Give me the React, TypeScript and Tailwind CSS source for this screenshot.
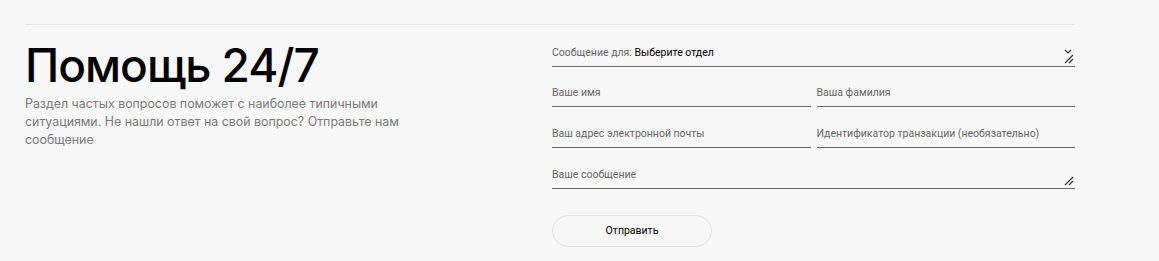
import React from "react";

function Resize() {
  return (
    <svg width="10" height="10" viewBox="0 0 10 10" className="absolute right-[1px] bottom-[2px]">
      <path d="M9 1 L1 9 M9 5 L5 9" stroke="#333" strokeWidth="1.2" />
    </svg>
  );
}

function Field({ label, children, resize }: { label: React.ReactNode; children?: React.ReactNode; resize?: boolean }) {
  return (
    <div className="relative flex-1 h-[27px] border-b border-[#6b6b6b] flex items-start pt-[5px] text-[10.5px] text-[#666]">
      {label}
      {children}
      {resize && <Resize />}
    </div>
  );
}

export default function App() {
  return (
    <div className="w-[1159px] h-[261px] bg-[#f7f7f7] pt-[24px] px-[25px] overflow-hidden" style={{ fontFamily: "Inter, 'Noto Sans', sans-serif" }}>
      <div className="w-[1050px] border-t border-[#e4e4e4] flex pt-[15px]">
        <div className="w-[527px]">
          <h1 className="text-[46px] leading-[52px] text-black tracking-[-1px] font-medium -mt-[1px]">Помощь 24/7</h1>
          <p className="mt-[4px] text-[12.4px] leading-[18px] text-[#7a7a7a] w-[390px]">
            Раздел частых вопросов поможет с наиболее типичными ситуациями. Не нашли ответ на свой вопрос? Отправьте нам сообщение
          </p>
        </div>
        <div className="flex-1 flex flex-col" style={{ fontFamily: "Roboto, 'Liberation Sans', sans-serif" }}>
          <div className="flex">
            <Field
              resize
              label={
                <span>
                  Сообщение для: <span className="text-black">Выберите отдел</span>
                </span>
              }
            >
              <svg width="8" height="5" viewBox="0 0 8 5" className="absolute right-[3px] top-[9px]">
                <path d="M1 1 L4 4 L7 1" stroke="#333" strokeWidth="1.2" fill="none" />
              </svg>
            </Field>
          </div>
          <div className="flex gap-[6px] mt-[13px]">
            <Field label="Ваше имя" />
            <Field label="Ваша фамилия" />
          </div>
          <div className="flex gap-[6px] mt-[14px]">
            <Field label="Ваш адрес электронной почты" />
            <Field label="Идентификатор транзакции (необязательно)" />
          </div>
          <div className="flex mt-[14px]">
            <Field resize label="Ваше сообщение" />
          </div>
          <button className="mt-[26px] w-[160px] h-[32px] rounded-full border border-[#e2e2e2] bg-[#f7f7f7] text-[10.5px] text-black">
            Отправить
          </button>
        </div>
      </div>
    </div>
  );
}
